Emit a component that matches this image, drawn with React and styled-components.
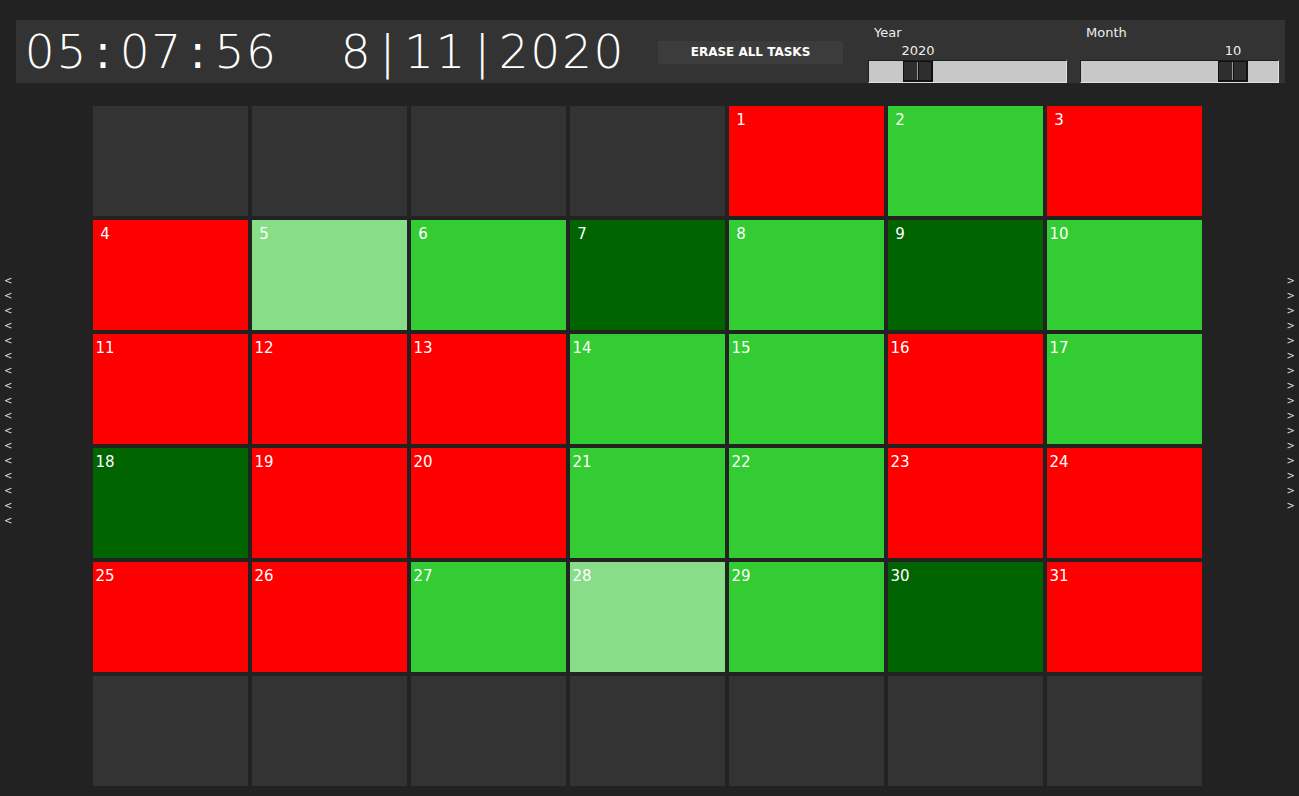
import React from "react";
import styled, { createGlobalStyle } from "styled-components";

const GlobalStyle = createGlobalStyle`
  html, body {
    margin: 0;
    padding: 0;
    background: #222222;
  }
  * {
    box-sizing: border-box;
  }
`;

const Page = styled.div`
  min-height: 796px;
  background: #222222;
  padding-top: 20px;
  font-family: "DejaVu Sans", "Liberation Sans", sans-serif;
  color: #ffffff;
`;

const Header = styled.header`
  display: flex;
  align-items: stretch;
  height: 63px;
  margin: 0 14px 0 16px;
  background: #333333;
`;

const Clock = styled.div`
  display: flex;
  align-items: center;
  padding: 0 0 1px 8px;
  width: 642px;
  font-family: "DejaVu Sans", "Liberation Sans", sans-serif;
  font-size: 47px;
  font-weight: 200;
  color: #ffffff;
`;

const ClockChar = styled.span`
  display: inline-block;
  width: 31.6px;
  text-align: center;
  font-weight: ${(p) => (p.$dots ? 400 : 200)};
`;

const EraseButton = styled.button`
  align-self: center;
  width: 185px;
  height: 23px;
  margin-top: 1px;
  border: none;
  background: #3c3c3c;
  color: #ffffff;
  font-family: "DejaVu Sans", sans-serif;
  font-size: 12px;
  font-weight: bold;
  cursor: pointer;
`;

const SliderGroup = styled.div`
  display: flex;
  flex-direction: column;
  width: 199px;
  margin-left: ${(p) => p.$gap}px;
  padding-top: 6px;
`;

const SliderLabel = styled.div`
  height: 18px;
  padding-left: 6px;
  font-size: 13px;
  line-height: 14px;
  color: #eeeeee;
`;

const SliderValue = styled.div`
  position: relative;
  height: 16px;
  font-size: 13px;
  line-height: 14px;
  color: #eeeeee;
`;

const ValueText = styled.span`
  position: absolute;
  top: 0;
  transform: translateX(-50%);
`;

const Track = styled.div`
  position: relative;
  height: 23px;
  background: #c8c8c8;
  border-top: 1px solid #1e1e1e;
  border-left: 1px solid #1e1e1e;
  border-right: 1px solid #e0e0e0;
  border-bottom: 1px solid #e0e0e0;
`;

const Thumb = styled.div`
  position: absolute;
  top: 0;
  bottom: 0;
  width: 30px;
  display: flex;
  border: 1px solid #111111;
  border-bottom-width: 2px;
  border-right-width: 2px;
`;

const ThumbHalf = styled.div`
  flex: 1;
  background: #2e2e2e;
  border-left: ${(p) => (p.$divided ? "1px solid #999999" : "none")};
  box-shadow: ${(p) => (p.$divided ? "inset 1px 0 0 #111111" : "none")};
`;

const Main = styled.main`
  display: flex;
  margin-top: 23px;
`;

const ArrowColumn = styled.div`
  display: flex;
  flex-direction: column;
  align-items: ${(p) => (p.$right ? "flex-end" : "flex-start")};
  width: ${(p) => (p.$right ? "auto" : "93px")};
  flex: ${(p) => (p.$right ? 1 : "none")};
  padding: 167px ${(p) => (p.$right ? "4px" : "0")} 0 ${(p) => (p.$right ? "0" : "4px")};
`;

const Arrow = styled.span`
  font-family: "DejaVu Sans", sans-serif;
  font-size: 10px;
  line-height: 15px;
  height: 15px;
  color: #dddddd;
`;

const Grid = styled.div`
  display: grid;
  grid-template-columns: repeat(7, 155px);
  grid-auto-rows: 110px;
  gap: 4px;
`;

const colors = {
  empty: "#333333",
  red: "#ff0000",
  green: "#33cc33",
  dark: "#006400",
  light: "#88dd88",
};

const Cell = styled.div`
  background: ${(p) => colors[p.$status]};
  padding: 4px 0 0 1px;
`;

const DayNumber = styled.span`
  display: inline-block;
  width: 22px;
  text-align: center;
  font-family: "DejaVu Sans", sans-serif;
  font-size: 15px;
  line-height: 18px;
  color: #ffffff;
`;

const statuses = [
  "red", "green", "red",
  "red", "light", "green", "dark", "green", "dark", "green",
  "red", "red", "red", "green", "green", "red", "green",
  "dark", "red", "red", "green", "green", "red", "red",
  "red", "red", "green", "light", "green", "dark", "red",
];

const Slider = ({ label, value, thumbLeft, gap }) => (
  <SliderGroup $gap={gap}>
    <SliderLabel>{label}</SliderLabel>
    <SliderValue>
      <ValueText style={{ left: thumbLeft + 16 }}>{value}</ValueText>
    </SliderValue>
    <Track>
      <Thumb style={{ left: thumbLeft }}>
        <ThumbHalf />
        <ThumbHalf $divided />
      </Thumb>
    </Track>
  </SliderGroup>
);

const clockText = "05:07:56  8|11|2020";

const App = () => {
  const offset = 4;
  const cells = [];
  for (let i = 0; i < 42; i++) {
    const day = i - offset + 1;
    const inMonth = day >= 1 && day <= 31;
    cells.push(
      <Cell key={i} $status={inMonth ? statuses[day - 1] : "empty"}>
        {inMonth && <DayNumber>{day}</DayNumber>}
      </Cell>
    );
  }

  return (
    <Page>
      <GlobalStyle />
      <Header>
        <Clock>
          {clockText.split("").map((ch, i) => (
            <ClockChar key={i} $dots={ch === ":"}>
              {ch === " " ? "\u00a0" : ch}
            </ClockChar>
          ))}
        </Clock>
        <EraseButton>ERASE ALL TASKS</EraseButton>
        <Slider label="Year" value="2020" thumbLeft={34} gap={25} />
        <Slider label="Month" value="10" thumbLeft={137} gap={13} />
      </Header>
      <Main>
        <ArrowColumn>
          {Array.from({ length: 17 }).map((_, i) => (
            <Arrow key={i}>&lt;</Arrow>
          ))}
        </ArrowColumn>
        <Grid>{cells}</Grid>
        <ArrowColumn $right>
          {Array.from({ length: 16 }).map((_, i) => (
            <Arrow key={i}>&gt;</Arrow>
          ))}
        </ArrowColumn>
      </Main>
    </Page>
  );
};

export default App;
